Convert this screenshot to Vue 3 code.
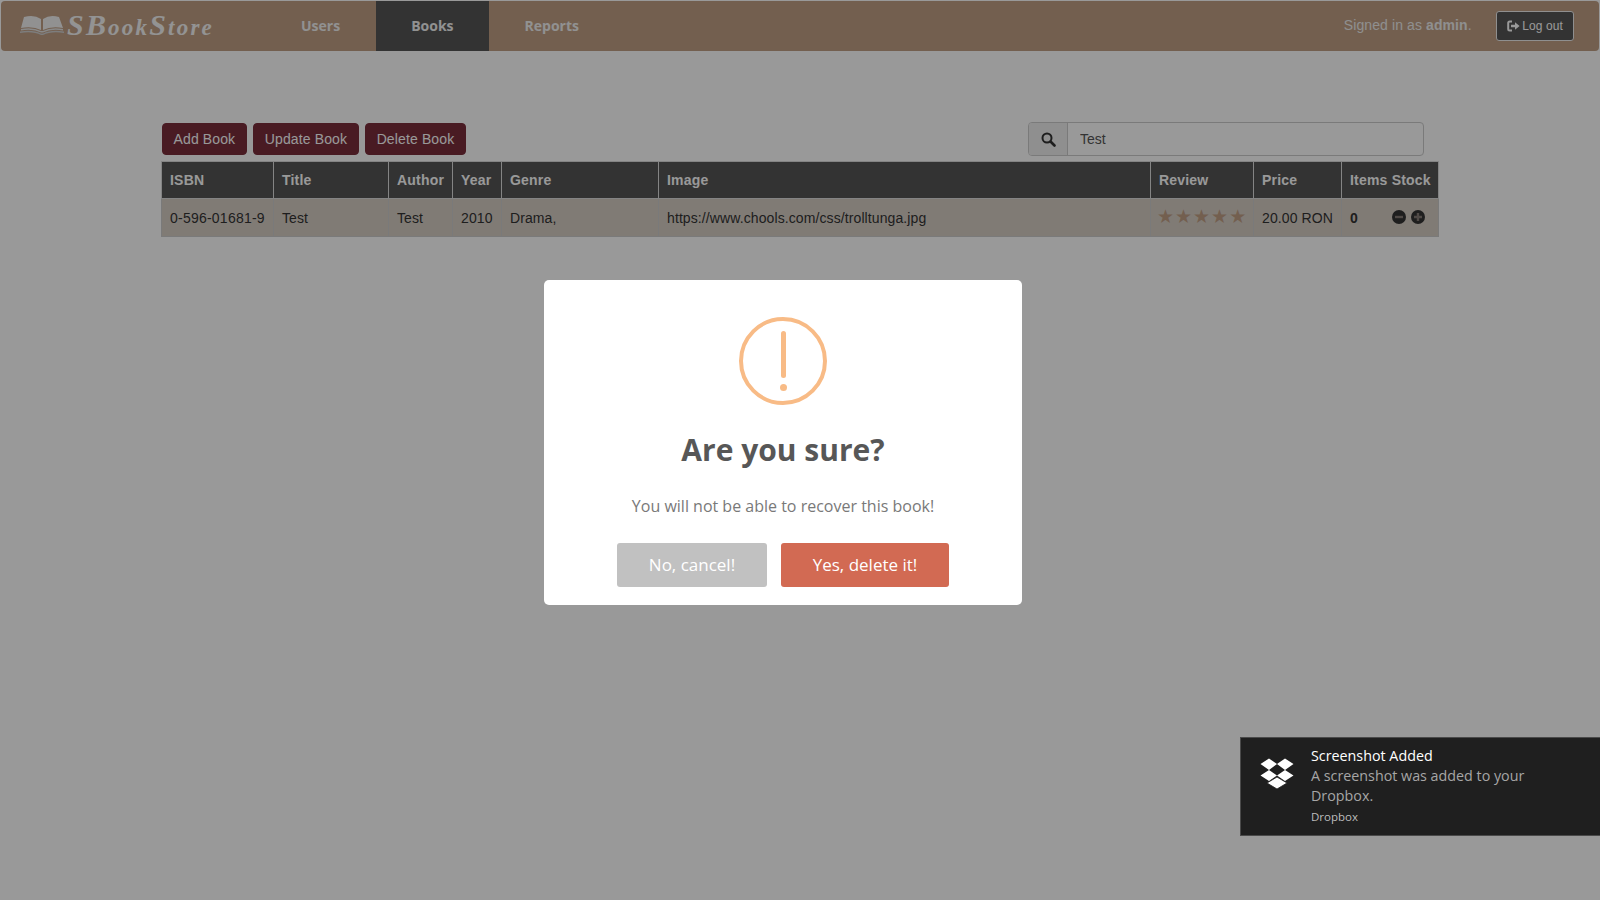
<template>
  <div class="page">
    <nav class="navbar">
      <a class="brand">
        <svg class="brand-book" width="44" height="20" viewBox="0 0 44 20">
          <path d="M4 2 Q14 -1 21 4 L21 15 Q13 11 1 13 Z" fill="#f2f2f2" />
          <path d="M23 4 Q30 -1 39 2 L43 13 Q31 11 23 15 Z" fill="#f2f2f2" />
          <path d="M1 14 Q13 12 21 16 L23 16 Q31 12 43 14 L43 15.500 Q31 13.500 23 17.500 L21 17.500 Q13 13.500 1 15.500 Z" fill="#e4e4e4" />
          <path d="M0 16.500 Q13 14.500 21 18.500 L23 18.500 Q31 14.500 44 16.500 L44 18 Q31 16 23 20 L21 20 Q13 16 0 18 Z" fill="#d0d0d0" />
        </svg>
        <span class="brand-text"><span class="swash">S</span><span class="swash">B</span>ook<span class="swash">S</span>tore</span>
      </a>
      <ul class="nav-links">
        <li v-for="link in links" :key="link" :class="{ active: link === 'Books' }">{{ link }}</li>
      </ul>
      <div class="nav-right">
        <span class="signed">Signed in as <b>admin</b>.</span>
        <button class="logout">
          <svg width="13" height="12" viewBox="0 0 13 12">
            <path d="M5 1.500 H2.800 Q1.200 1.500 1.200 3 V9 Q1.200 10.500 2.800 10.500 H5" fill="none" stroke="currentColor" stroke-width="2" />
            <path d="M4 4.700 H8 V2.200 L12.600 6 L8 9.800 V7.300 H4 Z" fill="currentColor" />
          </svg>
          Log out
        </button>
      </div>
    </nav>

    <main class="content">
      <div class="toolbar">
        <div class="actions">
          <button v-for="a in actions" :key="a" class="action">{{ a }}</button>
        </div>
        <div class="search">
          <span class="search-addon">
            <svg width="15" height="15" viewBox="0 0 15 15">
              <circle cx="6" cy="6" r="4.500" fill="none" stroke="#333" stroke-width="2" />
              <path d="M9.500 9.500 L13.500 13.500" stroke="#333" stroke-width="2.600" stroke-linecap="round" />
            </svg>
          </span>
          <input class="search-input" value="Test" />
        </div>
      </div>

      <table class="books">
        <colgroup>
          <col v-for="c in columns" :key="c.name" :class="c.cls" />
        </colgroup>
        <thead>
          <tr>
            <th v-for="c in columns" :key="c.name">{{ c.name }}</th>
          </tr>
        </thead>
        <tbody>
          <tr>
            <td class="isbn">0-596-01681-9</td>
            <td>Test</td>
            <td>Test</td>
            <td>2010</td>
            <td>Drama,</td>
            <td>https://www.chools.com/css/trolltunga.jpg</td>
            <td class="stars">★★★★★</td>
            <td>20.00 RON</td>
            <td>
              <div class="stock">
                <b>0</b>
                <span class="stock-btns">
                  <svg width="14" height="14" viewBox="0 0 14 14">
                    <circle cx="7" cy="7" r="7" fill="#333" />
                    <rect x="3" y="5.800" width="8" height="2.400" fill="#847b75" />
                  </svg>
                  <svg width="14" height="14" viewBox="0 0 14 14">
                    <circle cx="7" cy="7" r="7" fill="#333" />
                    <path d="M5.800 3 H8.200 V5.800 H11 V8.200 H8.200 V11 H5.800 V8.200 H3 V5.800 H5.800 Z" fill="#847b75" />
                  </svg>
                </span>
              </div>
            </td>
          </tr>
        </tbody>
      </table>
    </main>

    <div class="overlay">
      <div class="alert">
        <div class="alert-icon">
          <span class="mark"></span>
          <span class="dot"></span>
        </div>
        <h2>Are you sure?</h2>
        <p>You will not be able to recover this book!</p>
        <div class="alert-btns">
          <button class="cancel">No, cancel!</button>
          <button class="confirm">Yes, delete it!</button>
        </div>
      </div>
    </div>

    <div class="toast">
      <svg class="toast-logo" width="34" height="32" viewBox="0 0 34 32">
        <path d="M9 0.500 L17 6 L9 12 L0.500 6 Z M25 0.500 L33.500 6 L25 12 L17 6 Z M9 12 L17 17.500 L9 23 L0.500 17.500 Z M25 12 L33.500 17.500 L25 23 L17 17.500 Z" fill="#fff" />
        <path d="M17 19 L27 25 L17 31 L7 25 Z" fill="#fff" stroke="#1f1f1f" stroke-width="0.800" />
      </svg>
      <div class="toast-body">
        <div class="toast-title">Screenshot Added</div>
        <div class="toast-text">A screenshot was added to your Dropbox.</div>
        <div class="toast-app">Dropbox</div>
      </div>
    </div>
  </div>
</template>

<script setup>
const links = ['Users', 'Books', 'Reports']
const actions = ['Add Book', 'Update Book', 'Delete Book']
const columns = [
  { name: 'ISBN', cls: 'c-isbn' },
  { name: 'Title', cls: 'c-title' },
  { name: 'Author', cls: 'c-author' },
  { name: 'Year', cls: 'c-year' },
  { name: 'Genre', cls: 'c-genre' },
  { name: 'Image', cls: 'c-image' },
  { name: 'Review', cls: 'c-review' },
  { name: 'Price', cls: 'c-price' },
  { name: 'Items Stock', cls: 'c-items' }
]
</script>

<style>
html, body {
  margin: 0;
  background: #fff;
}
</style>

<style scoped>
.page {
  min-height: 900px;
  font-family: "Liberation Sans", Arial, sans-serif;
  font-size: 14px;
  color: #333;
}

.navbar {
  display: flex;
  align-items: stretch;
  height: 50px;
  margin: 1px 1px 0;
  background: #c09f84;
  border-radius: 4px;
}

.brand {
  display: flex;
  align-items: center;
  gap: 3px;
  width: 264.500px;
  padding-left: 19px;
  box-sizing: border-box;
}

.brand-book {
  margin-top: -2px;
}

.brand-text {
  font-family: "Liberation Serif", serif;
  font-style: italic;
  font-weight: bold;
  font-size: 23px;
  letter-spacing: 2.200px;
  margin-top: -3px;
  white-space: nowrap;
  color: #f5f5f5;
}

.swash {
  font-size: 30px;
}

.nav-links {
  display: flex;
  list-style: none;
  margin: 0;
  padding: 0;
}

.nav-links li {
  display: flex;
  align-items: center;
  padding: 0 35.500px 2px;
  font-family: "Open Sans", sans-serif;
  font-weight: 700;
  font-size: 14px;
  color: #f2f2f2;
}

.nav-links li.active {
  background: #555;
}

.nav-right {
  display: flex;
  align-items: center;
  margin-left: auto;
  padding-right: 25px;
  color: #eee;
}

.signed {
  margin-top: -3px;
  letter-spacing: 0.100px;
}

.logout {
  display: flex;
  align-items: center;
  gap: 2px;
  height: 30px;
  margin-left: 24.500px;
  padding: 0 10px;
  font: 12px "Liberation Sans", Arial, sans-serif;
  letter-spacing: 0.100px;
  color: #fff;
  background: #555;
  border: 1px solid #eee;
  border-radius: 3px;
}

.content {
  width: 1278px;
  margin: 0 auto;
  padding-top: 71px;
}

.toolbar {
  display: flex;
  justify-content: space-between;
  padding-right: 15px;
  height: 39px;
}

.actions {
  display: flex;
  gap: 6.500px;
  margin-left: 1px;
  padding-top: 1px;
}

.action {
  height: 32px;
  padding: 0 10.500px;
  font: 14px "Liberation Sans", Arial, sans-serif;
  letter-spacing: 0.130px;
  color: #fff;
  background: #7a2d3b;
  border: 1px solid #7a2d3b;
  border-radius: 4px;
}

.search {
  display: flex;
  width: 396px;
  height: 34px;
  box-sizing: border-box;
  border: 1px solid #ccc;
  border-radius: 4px;
  background: #fff;
}

.search-addon {
  display: flex;
  align-items: center;
  justify-content: center;
  width: 38px;
  background: #eee;
  border-right: 1px solid #ccc;
  border-radius: 3px 0 0 3px;
}

.search-input {
  flex: 1;
  min-width: 0;
  padding: 0 12px;
  border: 0;
  outline: 0;
  background: transparent;
  font: 14px "Liberation Sans", Arial, sans-serif;
  color: #555;
}

.books {
  width: 1277px;
  table-layout: fixed;
  border-collapse: collapse;
  border: 1px solid #ccc;
}

.c-isbn { width: 112px; }
.c-title { width: 115px; }
.c-author { width: 64px; }
.c-year { width: 49px; }
.c-genre { width: 157px; }
.c-image { width: 492px; }
.c-review { width: 103px; }
.c-price { width: 88px; }
.c-items { width: 97px; }

.books th {
  height: 36px;
  padding: 0 8px;
  text-align: left;
  font-size: 14px;
  letter-spacing: 0.200px;
  white-space: nowrap;
  color: #fff;
  background: #555;
  border: 1px solid #ddd;
}

.books td {
  height: 37px;
  padding: 0 8px;
  white-space: nowrap;
  letter-spacing: 0.100px;
  color: #333;
  background: #d6cdc4;
  border: 1px solid #ccc;
}

.books td.isbn {
  letter-spacing: 0.230px;
}

.books td.stars {
  height: 35px;
  padding: 0 0 2px 6px;
  font-family: "DejaVu Sans", sans-serif;
  font-size: 19px;
  line-height: 1;
  letter-spacing: 1px;
  color: #c09f84;
}

.stock {
  display: flex;
  justify-content: space-between;
  align-items: center;
  padding-right: 5px;
}

.stock-btns {
  display: flex;
  gap: 5px;
  margin-top: -2px;
}

.stock-btns svg {
  display: block;
}

.overlay {
  position: fixed;
  inset: 0;
  background: rgba(0, 0, 0, 0.4);
}

.alert {
  position: absolute;
  left: 544px;
  top: 280px;
  width: 478px;
  height: 325px;
  box-sizing: border-box;
  padding-top: 37px;
  text-align: center;
  font-family: "Open Sans", sans-serif;
  background: #fff;
  border-radius: 5px;
}

.alert-icon {
  position: relative;
  width: 80px;
  height: 80px;
  margin: 0 auto;
  border: 4px solid #f8bb86;
  border-radius: 50%;
}

.mark {
  position: absolute;
  left: 37.500px;
  top: 10px;
  width: 5px;
  height: 47px;
  background: #f8bb86;
  border-radius: 3px;
}

.dot {
  position: absolute;
  left: 37px;
  top: 63px;
  width: 7px;
  height: 7px;
  background: #f8bb86;
  border-radius: 50%;
}

.alert h2 {
  margin: 25px 0 0;
  font-size: 30px;
  line-height: 40px;
  font-weight: 700;
  color: #575757;
}

.alert p {
  margin: 25px 0 0;
  font-size: 16px;
  line-height: 22px;
  color: #797979;
}

.alert-btns {
  display: flex;
  justify-content: center;
  gap: 14px;
  margin-top: 26px;
}

.alert-btns button {
  height: 44px;
  padding: 0 0 2px;
  border: 0;
  border-radius: 3px;
  color: #fff;
  font: 500 17px "Open Sans", sans-serif;
}

.cancel {
  width: 150px;
  background: #c1c1c1;
}

.confirm {
  width: 168px;
  background: #d26a53;
}

.toast {
  position: fixed;
  right: 0;
  top: 737px;
  display: flex;
  width: 360px;
  height: 99px;
  box-sizing: border-box;
  background: #1f1f1f;
  border: 1px solid #4a4a4a;
  border-right: 0;
}

.toast-logo {
  margin: 20px 0 0 19px;
}

.toast-body {
  width: 240px;
  margin-left: 17px;
  padding-top: 8px;
  font-family: "Open Sans", sans-serif;
  font-size: 14.300px;
  line-height: 20px;
  color: #a6a6a6;
}

.toast-title {
  color: #fff;
}

.toast-app {
  font-size: 11.500px;
  line-height: 22px;
  color: #bdbdbd;
}
</style>
